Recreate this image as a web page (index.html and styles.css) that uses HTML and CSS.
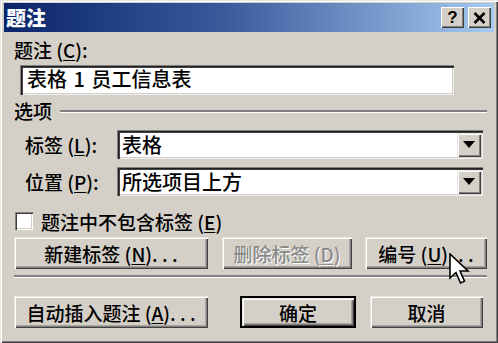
FILE: index.html
```html
<!DOCTYPE html>
<html lang="zh">
<head>
<meta charset="utf-8">
<link rel="stylesheet" href="styles.css">
</head>
<body>
<div class="dlg">
  <div class="title">
    <span class="ttext">题注</span>
    <div class="tbtns">
      <span class="tb q">?</span>
      <span class="tb"><svg width="13" height="12" viewBox="0 0 13 12"><path d="M1.5 1 L11.5 11 M11.5 1 L1.5 11" stroke="#000" stroke-width="2.6"/></svg></span>
    </div>
  </div>
  <div class="content">
    <div class="lbl1">题注 (<u>C</u>):</div>
    <div class="input">表格 1 员工信息表</div>
    <div class="group"><span>选项</span><span class="groove"></span></div>
    <div class="row r1">
      <span class="rl">标签 (<u>L</u>):</span>
      <div class="combo"><span class="cv">表格</span><span class="dd"><svg width="12" height="7" viewBox="0 0 12 7"><path d="M0 0 H12 L6 7 Z" fill="#000"/></svg></span></div>
    </div>
    <div class="row r2">
      <span class="rl">位置 (<u>P</u>):</span>
      <div class="combo"><span class="cv">所选项目上方</span><span class="dd"><svg width="12" height="7" viewBox="0 0 12 7"><path d="M0 0 H12 L6 7 Z" fill="#000"/></svg></span></div>
    </div>
    <div class="check"><span class="cb"></span><span>题注中不包含标签 (<u>E</u>)</span></div>
    <div class="btnrow b1">
      <div class="btn w1">新建标签 (<u>N</u>). . .</div>
      <div class="btn w2 dis">删除标签 (<u>D</u>)</div>
      <div class="btn w3">编号 (<u>U</u>). . .</div>
    </div>
    <div class="sep"></div>
    <div class="btnrow b2">
      <div class="btn w1">自动插入题注 (<u>A</u>). . .</div>
      <div class="defb"><div class="btn w4">确定</div></div>
      <div class="btn w5">取消</div>
    </div>
  </div>
  <svg class="cursor" width="22" height="34" viewBox="0 0 22 34">
    <path d="M1 1 L1 25 L7 19.5 L11.5 30 L15.5 28.2 L11 18 L19 18 Z" fill="#fff" stroke="#000" stroke-width="1.6" stroke-linejoin="miter"/>
  </svg>
</div>
</body>
</html>
```

FILE: styles.css
```css
html, body {
  margin: 0;
  padding: 0;
  background: #d4d0c8;
}
.dlg {
  position: relative;
  box-sizing: border-box;
  width: 498px;
  height: 343px;
  padding: 3px 4px 4px 4px;
  background: #d4d0c8;
  box-shadow: inset 1px 1px 0 #e8e6e0, inset 2px 2px 0 #ffffff, inset -1px -1px 0 #404040, inset -2px -2px 0 #808080;
  font-family: "Noto Sans CJK SC", "Noto Sans", sans-serif;
  font-weight: 500;
  color: #000;
  overflow: hidden;
}
.title {
  height: 29px;
  display: flex;
  align-items: center;
  justify-content: space-between;
  background: linear-gradient(to right, #0a246a 0%, #3a5a9c 45%, #a6caf0 100%);
  padding: 0 3px 0 2px;
}
.ttext {
  color: #fff;
  font-weight: 900;
  font-size: 20px;
  line-height: 29px;
}
.tbtns {
  display: flex;
  gap: 4px;
}
.tb {
  width: 23px;
  height: 21px;
  box-sizing: border-box;
  display: flex;
  align-items: center;
  justify-content: center;
  background: #d4d0c8;
  box-shadow: inset 1px 1px 0 #fff, inset -1px -1px 0 #404040, inset -2px -2px 0 #808080;
}
.tb.q {
  font-family: "Liberation Sans", sans-serif;
  font-weight: bold;
  font-size: 17px;
  line-height: 21px;
}
.content {
  padding: 0 7px 0 10px;
  font-size: 19px;
}
u {
  text-decoration: underline;
  text-underline-offset: 2px;
  text-decoration-thickness: 1px;
}
.lbl1 {
  height: 24px;
  line-height: 24px;
  margin-top: 6px;
}
.input {
  margin: 3px 0 0 6px;
  width: 434px;
  height: 30px;
  box-sizing: border-box;
  background: #fff;
  font-size: 20px;
  line-height: 28px;
  padding: 0 0 0 7px;
  word-spacing: 2px;
  box-shadow: inset 1px 1px 0 #808080, inset 2px 2px 0 #202020, inset 3px 3px 0 #404040, inset -1px -1px 0 #f0f0f0, inset -2px -2px 0 #d4d0c8;
}
.group {
  display: flex;
  align-items: center;
  height: 24px;
  margin-top: 3px;
}
.groove {
  flex: 1;
  height: 0;
  border-top: 2px solid #808080;
  border-bottom: 1px solid #fff;
  margin: 3px 0 0 8px;
}
.row {
  display: flex;
  align-items: center;
  padding-left: 11px;
}
.r1 { margin-top: 8px; }
.r2 { margin-top: 8px; }
.rl {
  width: 92px;
}
.combo {
  width: 366px;
  height: 29px;
  box-sizing: border-box;
  background: #fff;
  display: flex;
  align-items: center;
  justify-content: space-between;
  padding: 2px 2px 2px 5px;
  box-shadow: inset 1px 1px 0 #808080, inset 2px 2px 0 #202020, inset 3px 3px 0 #404040, inset -1px -1px 0 #f0f0f0, inset -2px -2px 0 #d4d0c8;
}
.cv {
  font-size: 20px;
  line-height: 25px;
}
.dd {
  width: 24px;
  height: 24px;
  box-sizing: border-box;
  background: #d4d0c8;
  display: flex;
  align-items: center;
  justify-content: center;
  box-shadow: inset 1px 1px 0 #e8e6e0, inset 2px 2px 0 #fff, inset -1px -1px 0 #404040, inset -2px -2px 0 #808080;
}
.check {
  display: flex;
  align-items: center;
  margin-top: 15px;
  height: 20px;
  gap: 8px;
  padding-left: 1px;
}
.cb {
  width: 18px;
  height: 18px;
  box-sizing: border-box;
  background: #fff;
  box-shadow: inset 1px 1px 0 #808080, inset 2px 2px 0 #404040, inset -1px -1px 0 #fff, inset -2px -2px 0 #d4d0c8;
}
.btnrow {
  display: flex;
  align-items: center;
}
.b1 { margin-top: 6px; }
.b2 { margin-top: 18px; }
.btn {
  height: 32px;
  box-sizing: border-box;
  display: flex;
  align-items: center;
  justify-content: center;
  background: #d4d0c8;
  font-size: 19px;
  box-shadow: inset 1px 1px 0 #e8e6e0, inset 2px 2px 0 #fff, inset -1px -1px 0 #404040, inset -2px -2px 0 #808080, inset -3px -3px 0 #a8a49c;
}
.w1 { width: 194px; }
.w2 { width: 130px; margin-left: 14px; }
.w3 { width: 122px; margin-left: 13px; }
.defb {
  margin-left: 32px;
  border: 2px solid #000;
  height: 32px;
  box-sizing: border-box;
}
.defb .btn { height: 28px; }
.w4 { width: 112px; }
.w5 { width: 113px; margin-left: 14px; }
.dis {
  color: #8a8a8a;
  text-shadow: 1px 1px 0 #fff;
}
.sep {
  margin-top: 6px;
  height: 0;
  border-top: 2px solid #808080;
  border-bottom: 1px solid #fff;
}
.cursor {
  position: absolute;
  left: 449px;
  top: 253px;
}
```
